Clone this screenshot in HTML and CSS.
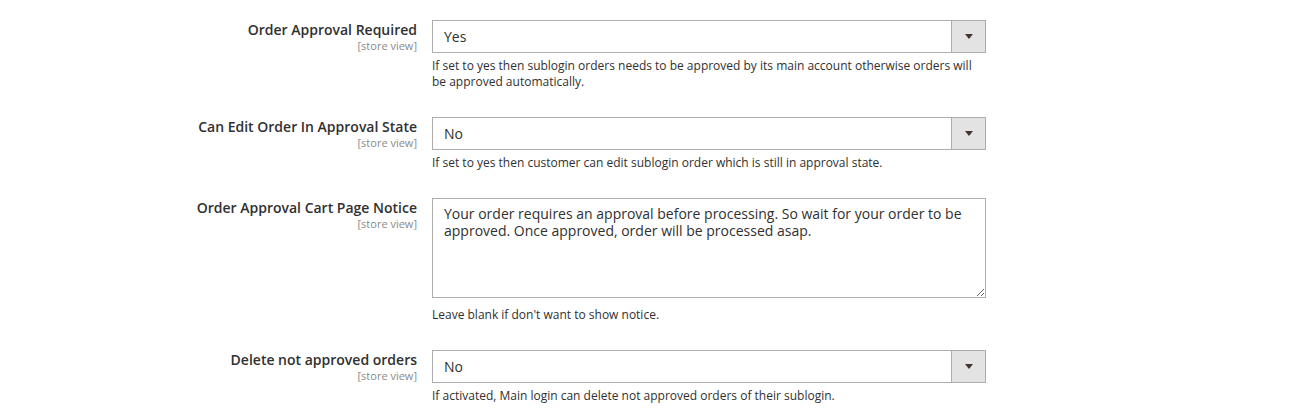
FILE: index.html
```html
<!DOCTYPE html>
<html lang="en">
<head>
  <meta charset="UTF-8" />
  <title>Order Approval Settings</title>
  <link rel="stylesheet" href="styles.css">
</head>
<body>

  <!-- Order approval config fields -->
  <div class="config-form">

    <div class="field">
      <div class="field-label">
        <label for="approvalRequired">Order Approval Required</label>
        <span class="scope">[store view]</span>
      </div>
      <div class="field-control">
        <div class="select-box">
          <span class="select-value">Yes</span>
          <span class="select-btn"><i class="arrow"></i></span>
        </div>
        <p class="note">If set to yes then sublogin orders needs to be approved by its main account otherwise orders will be approved automatically.</p>
      </div>
    </div>

    <div class="field">
      <div class="field-label">
        <label for="editInApproval">Can Edit Order In Approval State</label>
        <span class="scope">[store view]</span>
      </div>
      <div class="field-control">
        <div class="select-box">
          <span class="select-value">No</span>
          <span class="select-btn"><i class="arrow"></i></span>
        </div>
        <p class="note">If set to yes then customer can edit sublogin order which is still in approval state.</p>
      </div>
    </div>

    <div class="field">
      <div class="field-label">
        <label for="cartNotice">Order Approval Cart Page Notice</label>
        <span class="scope">[store view]</span>
      </div>
      <div class="field-control">
        <textarea id="cartNotice" class="notice-text">Your order requires an approval before processing. So wait for your order to be approved. Once approved, order will be processed asap.</textarea>
        <p class="note">Leave blank if don't want to show notice.</p>
      </div>
    </div>

    <div class="field">
      <div class="field-label">
        <label for="deleteOrders">Delete not approved orders</label>
        <span class="scope">[store view]</span>
      </div>
      <div class="field-control">
        <div class="select-box">
          <span class="select-value">No</span>
          <span class="select-btn"><i class="arrow"></i></span>
        </div>
        <p class="note">If activated, Main login can delete not approved orders of their sublogin.</p>
      </div>
    </div>

  </div>

</body>
</html>
```

FILE: styles.css
```css
body {
  margin: 0;
  font-family: 'Open Sans', 'Noto Sans', sans-serif;
  background: #fff;
  color: #303030;
}

.config-form {
  padding-top: 20px;
}

.field {
  display: grid;
  grid-template-columns: 417px 554px;
  column-gap: 15px;
  margin-bottom: 27px;
}

.field-label {
  text-align: right;
  padding-top: 1px;
}

.field-label label {
  display: block;
  font-size: 14px;
  font-weight: 600;
  line-height: 18px;
}

.scope {
  display: block;
  font-size: 11px;
  line-height: 14px;
  color: #8a8a8a;
}

/* fake select, magento style */
.select-box {
  display: flex;
  height: 33px;
  box-sizing: border-box;
  border: 1px solid #adadad;
  background: #fff;
}

.select-value {
  flex: 1;
  padding: 0 11px;
  font-size: 14px;
  line-height: 31px;
}

.select-btn {
  width: 33px;
  border-left: 1px solid #adadad;
  background: #e3e3e3;
  display: flex;
  align-items: center;
  justify-content: center;
}

.arrow {
  width: 0;
  height: 0;
  border-left: 4px solid transparent;
  border-right: 4px solid transparent;
  border-top: 5px solid #41362f;
}

.notice-text {
  display: block;
  width: 554px;
  height: 100px;
  box-sizing: border-box;
  margin: 0 0 9px;
  padding: 6px 11px;
  border: 1px solid #adadad;
  border-radius: 0;
  font-family: inherit;
  font-size: 14px;
  line-height: 17px;
  color: #303030;
  resize: both;
}

.note {
  margin: 5px 0 0;
  font-size: 12px;
  line-height: 16px;
  padding-right: 10px;
}
```
